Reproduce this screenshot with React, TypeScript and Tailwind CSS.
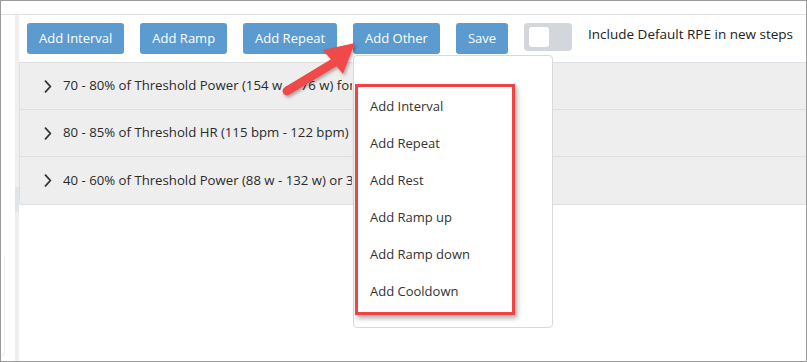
import React from "react";

const btn =
  "h-[31px] px-[12px] rounded-[3px] bg-[#5b9bd0] text-white text-[13px] leading-none flex items-center";

function Chevron() {
  return (
    <svg width="8" height="13" viewBox="0 0 8 13" className="shrink-0">
      <path d="M1.5 1.2 L6.4 6.5 L1.5 11.8" fill="none" stroke="#333" strokeWidth="1.8" strokeLinecap="round" strokeLinejoin="round" />
    </svg>
  );
}

function Row({ text, last }: { text: string; last?: boolean }) {
  return (
    <div className={`h-[47px] flex items-center pl-[24px] gap-[11px] ${last ? "" : "border-b border-[#dcdfe3]"}`}>
      <Chevron />
      <span className="w-[289px] overflow-hidden text-[13.2px] text-[#2a2a2a] whitespace-nowrap">{text}</span>
    </div>
  );
}

export default function App() {
  const items = ["Add Interval", "Add Repeat", "Add Rest", "Add Ramp up", "Add Ramp down", "Add Cooldown"];
  return (
    <div
      className="relative w-[807px] h-[362px] bg-white border border-[#9a9a9a] overflow-hidden flex flex-col"
      style={{ fontFamily: "'Open Sans', 'Liberation Sans', sans-serif" }}
    >
      <div className="h-[14px] border-b border-[#e2e2e2] shrink-0" />
      <div className="flex flex-1 min-h-0">
        <div className="w-[14px] relative">
          <div className="absolute left-[-8px] top-[241px] w-[12px] h-[100px] border-r border-b border-[#ececec] rounded-br-[4px]" />
        </div>
        <div className="w-[4px] bg-[#efefef] flex flex-col">
          <div className="h-[172px]" />
          <div className="h-[25px] bg-[#e1e4e8]" />
        </div>
        <div className="flex-1 flex flex-col">
          <div className="flex items-start gap-[16px] pl-[8px] pt-[8px] h-[47px]">
            <div className={btn}>Add Interval</div>
            <div className={btn}>Add Ramp</div>
            <div className={btn}>Add Repeat</div>
            <div className={btn}>Add Other</div>
            <div className={btn}>Save</div>
            <div className="w-[48px] h-[28px] rounded-[4px] bg-[#d3d6db] flex items-center pl-[5px]">
              <div className="w-[20px] h-[20px] rounded-[3px] bg-white" />
            </div>
            <div className="text-[13.5px] text-[#222] pt-[1px] whitespace-nowrap">Include Default RPE in new steps</div>
          </div>
          <div className="bg-[#eeeeee] border border-r-0 border-[#dcdfe3] rounded-bl-[3px]">
            <Row text="70 - 80% of Threshold Power (154 w - 176 w) for 10 min" />
            <Row text="80 - 85% of Threshold HR (115 bpm - 122 bpm) for 20 min" />
            <Row text="40 - 60% of Threshold Power (88 w - 132 w) or 3 min" last />
          </div>
        </div>
      </div>

      {/* Dropdown menu */}
      <div className="absolute left-[352px] top-[54px] w-[200px] h-[273px] bg-white border border-[#d9d9d9] rounded-[4px] pt-[32px] pl-[16px]">
        {items.map((t) => (
          <div key={t} className="h-[37px] flex items-center text-[13px] text-[#333]">
            {t}
          </div>
        ))}
      </div>

      {/* Red annotation box */}
      <div className="absolute left-[354px] top-[83px] w-[160px] h-[231px] border-[3px] border-[#f04444] shadow-[2px_3px_5px_rgba(0,0,0,0.35)]" />

      {/* Red arrow */}
      <svg className="absolute left-0 top-0" width="807" height="362" viewBox="0 0 807 362">
        <defs>
          <filter id="sh" x="-20%" y="-20%" width="140%" height="140%">
            <feDropShadow dx="1.5" dy="2" stdDeviation="1.5" floodColor="#000" floodOpacity="0.3" />
          </filter>
        </defs>
        <g filter="url(#sh)" fill="#f04848" stroke="none">
          <line x1="286" y1="90" x2="334" y2="61" stroke="#f04848" strokeWidth="9" strokeLinecap="round" />
          <polygon points="322,49 354,42 342,73" />
        </g>
      </svg>
    </div>
  );
}
